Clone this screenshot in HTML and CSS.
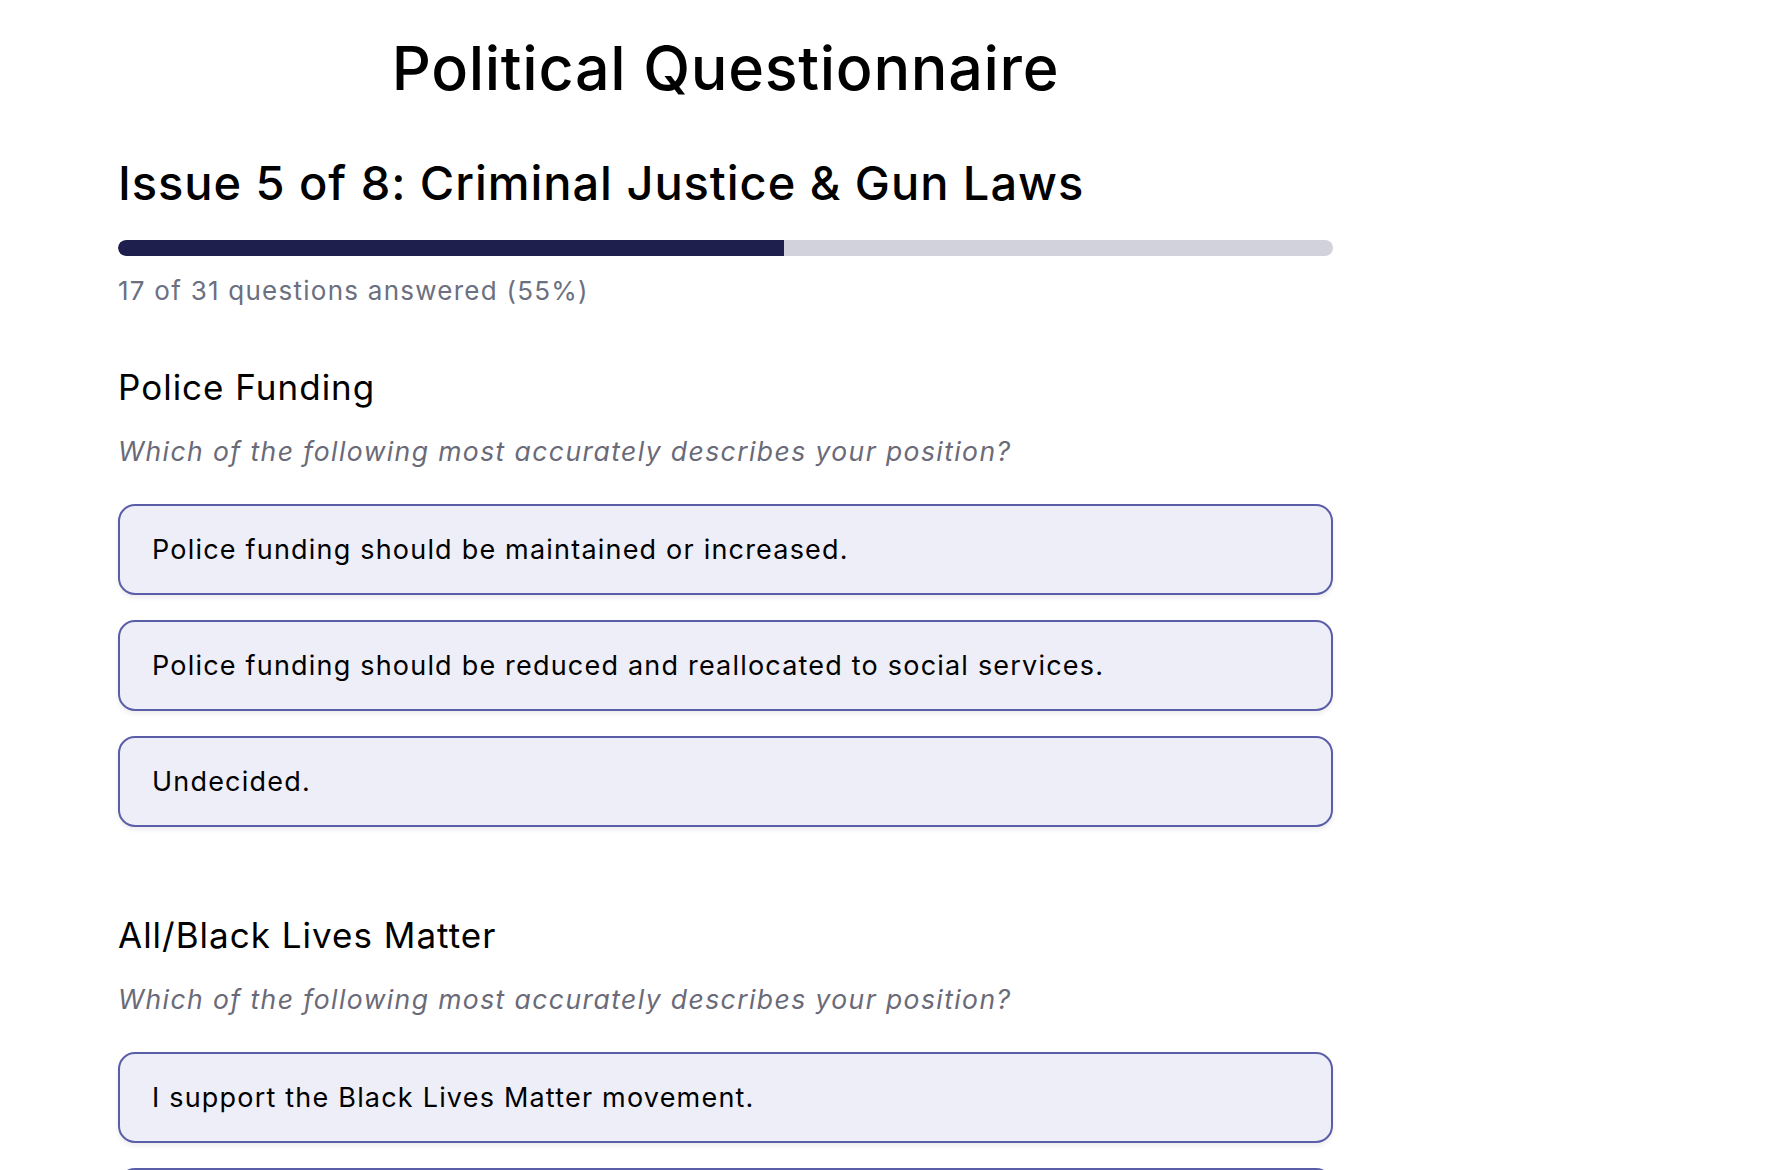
FILE: index.html
```html
<!DOCTYPE html>
<html lang="en">
<head>
<meta charset="utf-8">
<title>Political Questionnaire</title>
<link rel="stylesheet" href="styles.css">
</head>
<body>
<main class="page">
  <h1 class="title">Political Questionnaire</h1>
  <h2 class="issue">Issue 5 of 8: Criminal Justice &amp; Gun Laws</h2>
  <div class="progress"><div class="progress-fill" style="width: 54.8%"></div></div>
  <p class="progress-text">17 of 31 questions answered (55%)</p>

  <section class="question">
    <h3 class="q-title">Police Funding</h3>
    <p class="q-prompt">Which of the following most accurately describes your position?</p>
    <div class="options">
      <button class="option">Police funding should be maintained or increased.</button>
      <button class="option">Police funding should be reduced and reallocated to social services.</button>
      <button class="option">Undecided.</button>
    </div>
  </section>

  <section class="question">
    <h3 class="q-title">All/Black Lives Matter</h3>
    <p class="q-prompt">Which of the following most accurately describes your position?</p>
    <div class="options">
      <button class="option">I support the Black Lives Matter movement.</button>
      <button class="option">I support the All Lives Matter movement.</button>
      <button class="option">Undecided.</button>
    </div>
  </section>
</main>
</body>
</html>
```

FILE: styles.css
```css
html, body {
  margin: 0;
  padding: 0;
  background: #ffffff;
}

body {
  font-family: Inter, "Noto Sans", "Liberation Sans", sans-serif;
  color: #000000;
}

.page {
  width: 1215px;
  margin-left: 118px;
}

.title {
  margin: 32px 0 0;
  font-size: 61px;
  line-height: 73px;
  font-weight: 500;
  text-align: center;
  letter-spacing: 0.7px;
}

.issue {
  margin: 50px 0 0;
  font-size: 47px;
  line-height: 56px;
  font-weight: 500;
  letter-spacing: 0.95px;
}

.progress {
  margin-top: 29px;
  height: 16px;
  border-radius: 8px;
  background: #d2d2dc;
  overflow: hidden;
}

.progress-fill {
  height: 100%;
  background: #1e1f4d;
  border-radius: 8px 0 0 8px;
}

.progress-text {
  margin: 17px 0 0;
  font-size: 26px;
  line-height: 36px;
  color: #6b7080;
  letter-spacing: 1.25px;
}

.question {
  margin-top: 57px;
}

.question + .question {
  margin-top: 87px;
}

.q-title {
  margin: 0;
  font-size: 35px;
  line-height: 42px;
  font-weight: 400;
  letter-spacing: 1px;
}

.q-prompt {
  margin: 25px 0 0;
  font-size: 26.5px;
  line-height: 36px;
  font-style: italic;
  color: #6a6a78;
  letter-spacing: 1.42px;
}

.options {
  margin-top: 35px;
  display: flex;
  flex-direction: column;
  gap: 25px;
}

.option {
  display: block;
  width: 100%;
  box-sizing: border-box;
  height: 91px;
  padding: 0 32px;
  text-align: left;
  font-family: inherit;
  font-size: 27px;
  line-height: 39px;
  letter-spacing: 1.2px;
  color: #000000;
  background: #eeeef8;
  border: 2px solid #5a5ea8;
  border-radius: 17px;
  box-shadow: 0 3px 5px rgba(0, 0, 0, 0.07);
}
```
